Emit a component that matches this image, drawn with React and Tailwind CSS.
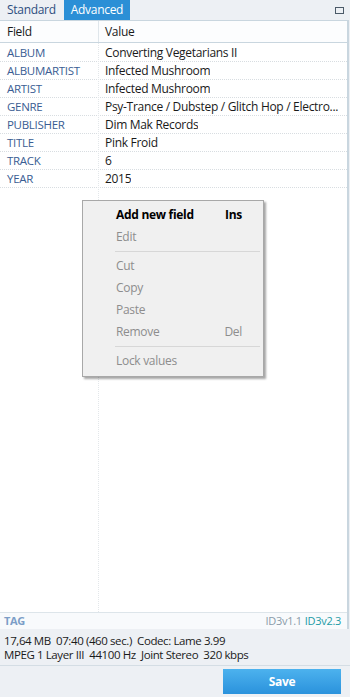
import React from 'react';

const rows = [
  ['ALBUM', 'Converting Vegetarians II'],
  ['ALBUMARTIST', 'Infected Mushroom'],
  ['ARTIST', 'Infected Mushroom'],
  ['GENRE', 'Psy-Trance / Dubstep / Glitch Hop / Electro...'],
  ['PUBLISHER', 'Dim Mak Records'],
  ['TITLE', 'Pink Froid'],
  ['TRACK', '6'],
  ['YEAR', '2015'],
];

function MenuItem({ label, shortcut, bold, disabled }) {
  return (
    <div className={`flex h-[22px] items-center pl-[33px] pr-[21px] ${bold ? 'font-bold text-black' : ''} ${disabled ? 'text-[#8d8d8d]' : ''}`}>
      <span className="flex-1">{label}</span>
      {shortcut && <span>{shortcut}</span>}
    </div>
  );
}

export default function App() {
  return (
    <div className="relative flex h-[697px] w-[350px] flex-col bg-[#edf0f4] text-[12px] tracking-[-0.3px] text-[#1a1a1a]" style={{ fontFamily: '"Open Sans", "Noto Sans", sans-serif' }}>
      {/* tabs */}
      <div className="flex h-[20px] items-stretch">
        <div className="flex items-center px-[7px] text-[#2e4e80]">Standard</div>
        <div className="ml-[1px] flex items-center bg-[#2b8fd6] px-[7px] text-white">Advanced</div>
        <div className="flex-1" />
        <div className="mr-[6px] mt-[7px] h-[7px] w-[9px] border border-[#4b5a68]" />
      </div>

      {/* field table */}
      <div className="mr-[1px] flex flex-1 flex-col border-r-2 border-t border-[#c9d6df] bg-white">
        <div className="flex h-[22px] items-center border-b border-[#c9d6df] bg-[#fcfdfe]">
          <div className="w-[99px] border-r border-[#dfe6eb] pl-[7px] leading-[21px]">Field</div>
          <div className="pl-[6px]">Value</div>
        </div>
        <div className="relative flex flex-1 flex-col pt-[1px]">
          <div className="absolute bottom-0 left-[98px] top-0 border-l border-dotted border-[#e3e7ea]" />
          {rows.map(([f, v]) => (
            <div key={f} className="flex h-[18px] items-center border-b border-dotted border-[#d8dde1]">
              <div className="w-[99px] pl-[7px] text-[11.5px] text-[#3a5d93]">{f}</div>
              <div className="truncate pl-[6px]">{v}</div>
            </div>
          ))}
        </div>
        <div className="flex h-[17px] items-center border-t border-[#dde5ea] bg-[#f8fafc] px-[4px]">
          <span className="flex-1 text-[11px] font-bold text-[#7c9ec7]">TAG</span>
          <span className="text-[11px] text-[#8a9aa8]">ID3v1.1</span>
          <span className="ml-[3px] mr-[2px] text-[11px] text-[#1c9aa6]">ID3v2.3</span>
        </div>
      </div>

      {/* info */}
      <div className="border-b border-[#d4dde4] px-[4px] pb-[3px] pt-[5px] text-[11.5px] leading-[14px] tracking-[-0.4px]">
        <div className="whitespace-pre">17,64 MB  07:40 (460 sec.)  Codec: Lame 3.99</div>
        <div className="whitespace-pre">MPEG 1 Layer III  44100 Hz  Joint Stereo  320 kbps</div>
      </div>

      <div className="flex h-[31px] items-center justify-end pr-[9px]">
        <button className="h-[25px] w-[118px] bg-gradient-to-b from-[#4cb2ee] to-[#2a92dc] text-[12px] font-bold text-white">Save</button>
      </div>

      {/* context menu */}
      <div className="absolute left-[82px] top-[200px] w-[182px] border border-[#a8a8a8] bg-[#f0f0f0] pb-[4px] pt-[3px] text-[12px] text-black shadow-[2px_2px_2px_rgba(0,0,0,0.35)]">
        <MenuItem label="Add new field" shortcut="Ins" bold />
        <MenuItem label="Edit" disabled />
        <div className="my-[3px] ml-[32px] mr-[3px] border-t border-[#d7d7d7]" />
        <MenuItem label="Cut" disabled />
        <MenuItem label="Copy" disabled />
        <MenuItem label="Paste" disabled />
        <MenuItem label="Remove" shortcut="Del" disabled />
        <div className="my-[3px] ml-[32px] mr-[3px] border-t border-[#d7d7d7]" />
        <MenuItem label="Lock values" disabled />
      </div>
    </div>
  );
}
